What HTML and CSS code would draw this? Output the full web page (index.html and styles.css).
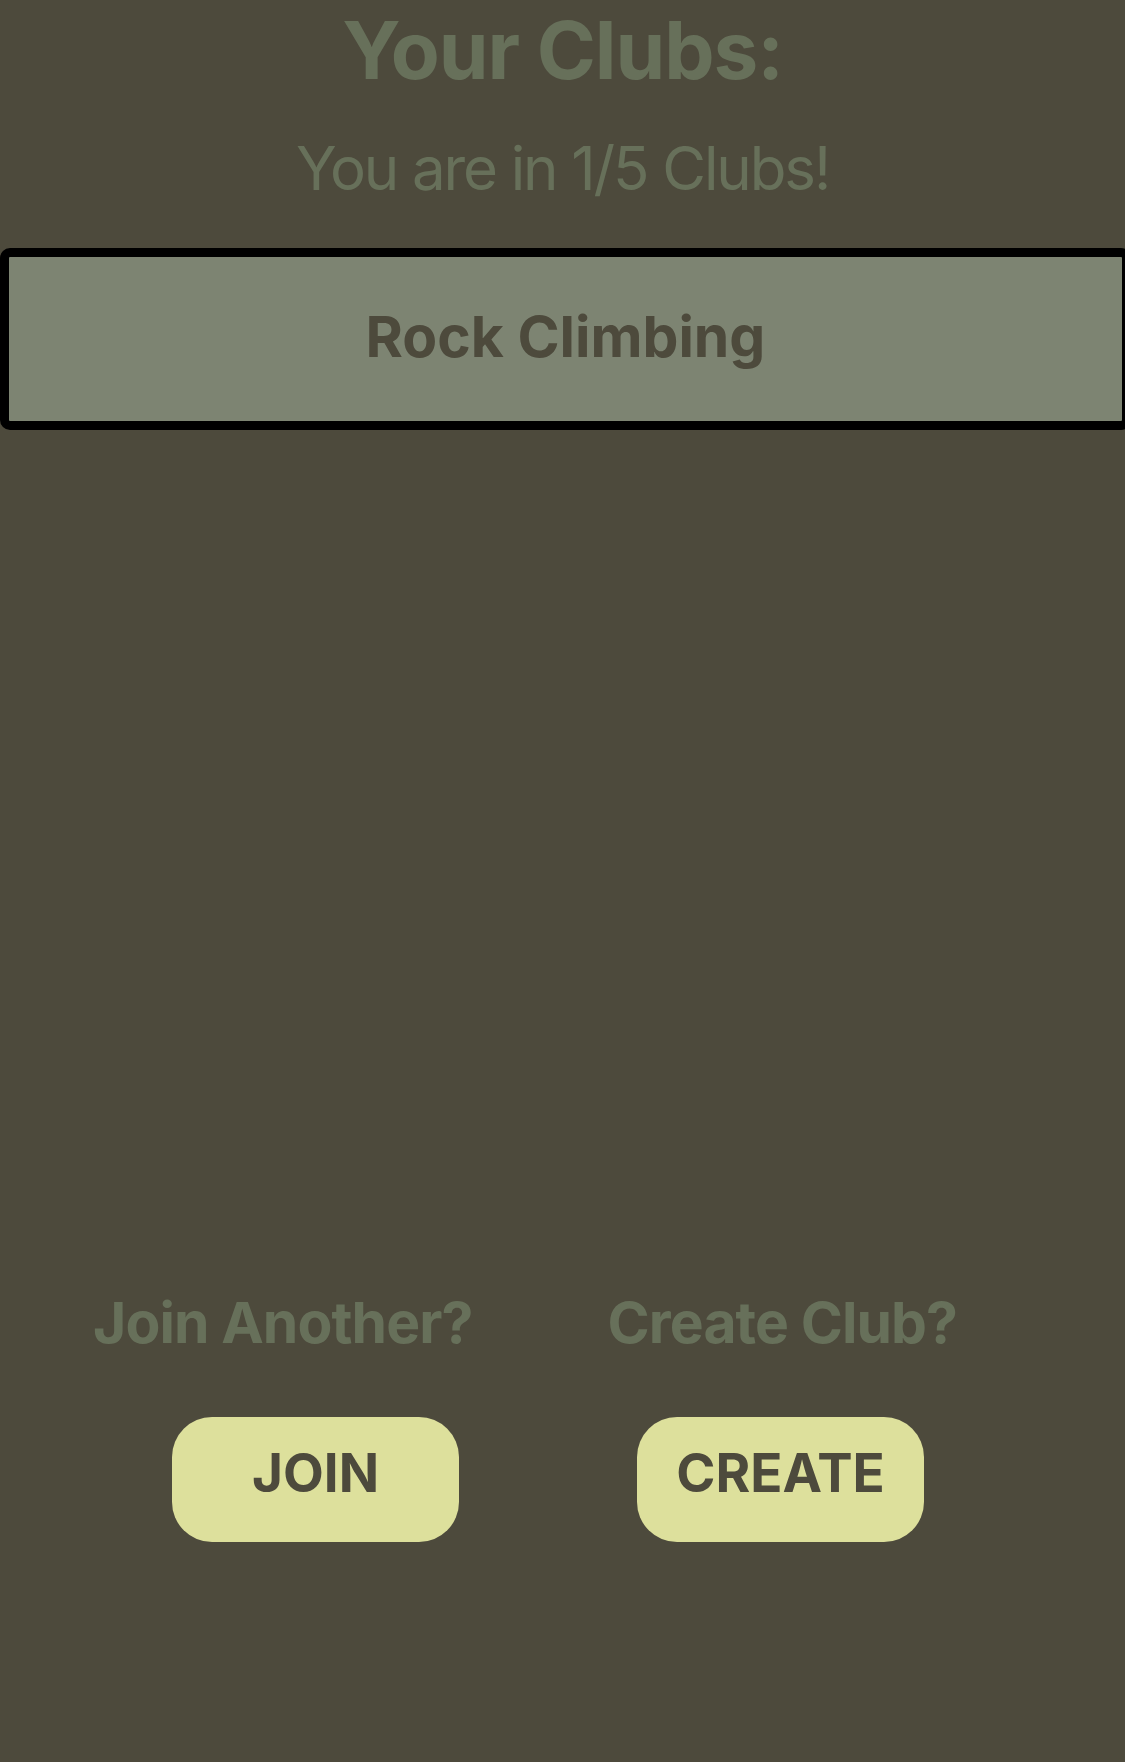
FILE: index.html
```html
<!DOCTYPE html>
<html lang="en">
<head>
<meta charset="utf-8">
<title>Your Clubs</title>
<link rel="stylesheet" href="styles.css">
</head>
<body>
<main class="screen">
  <h1 class="title">Your Clubs:</h1>
  <p class="subtitle">You are in 1/5 Clubs!</p>
  <div class="club-list">
    <div class="club-card">Rock Climbing</div>
  </div>
  <div class="label-row">
    <span class="action-label">Join Another?</span>
    <span class="action-label">Create Club?</span>
  </div>
  <div class="button-row">
    <button class="action-btn">JOIN</button>
    <button class="action-btn">CREATE</button>
  </div>
</main>
</body>
</html>
```
FILE: styles.css
```css
html, body {
  margin: 0;
  padding: 0;
  overflow: hidden;
  background: #4d4a3c;
}

.screen {
  width: 1125px;
  height: 1762px;
  display: flex;
  flex-direction: column;
  font-family: "Inter", "Noto Sans", sans-serif;
  color: #67705a;
}

.title {
  margin: 0;
  padding-top: 2px;
  font-size: 80px;
  line-height: 96px;
  font-weight: 700;
  letter-spacing: -1.1px;
  text-align: center;
}

.subtitle {
  margin: 34px 0 0;
  font-size: 60px;
  line-height: 72px;
  font-weight: 400;
  letter-spacing: -2.1px;
  text-align: center;
}

.club-list {
  margin-top: 44px;
  width: 1131px;
}

.club-card {
  box-sizing: border-box;
  height: 182px;
  border: 9px solid #000;
  border-radius: 10px;
  background: #7d8472;
  color: #4d4a3c;
  font-size: 57px;
  font-weight: 700;
  display: flex;
  align-items: center;
  justify-content: center;
  padding-bottom: 6px;
}

.label-row {
  margin-top: 859px;
  display: flex;
  gap: 135px;
  padding-left: 93px;
}

.action-label {
  font-size: 57px;
  line-height: 68px;
  font-weight: 700;
  letter-spacing: -0.9px;
  color: #67705a;
}

.button-row {
  margin-top: 60px;
  display: flex;
  gap: 178px;
  padding-left: 172px;
}

.action-btn {
  width: 287px;
  height: 125px;
  border: none;
  border-radius: 40px;
  background: #dde09c;
  color: #4d4a3c;
  font-family: "Inter", "Noto Sans", sans-serif;
  font-size: 53px;
  font-weight: 700;
  padding: 0 0 14px;
  display: flex;
  align-items: center;
  justify-content: center;
}
```
